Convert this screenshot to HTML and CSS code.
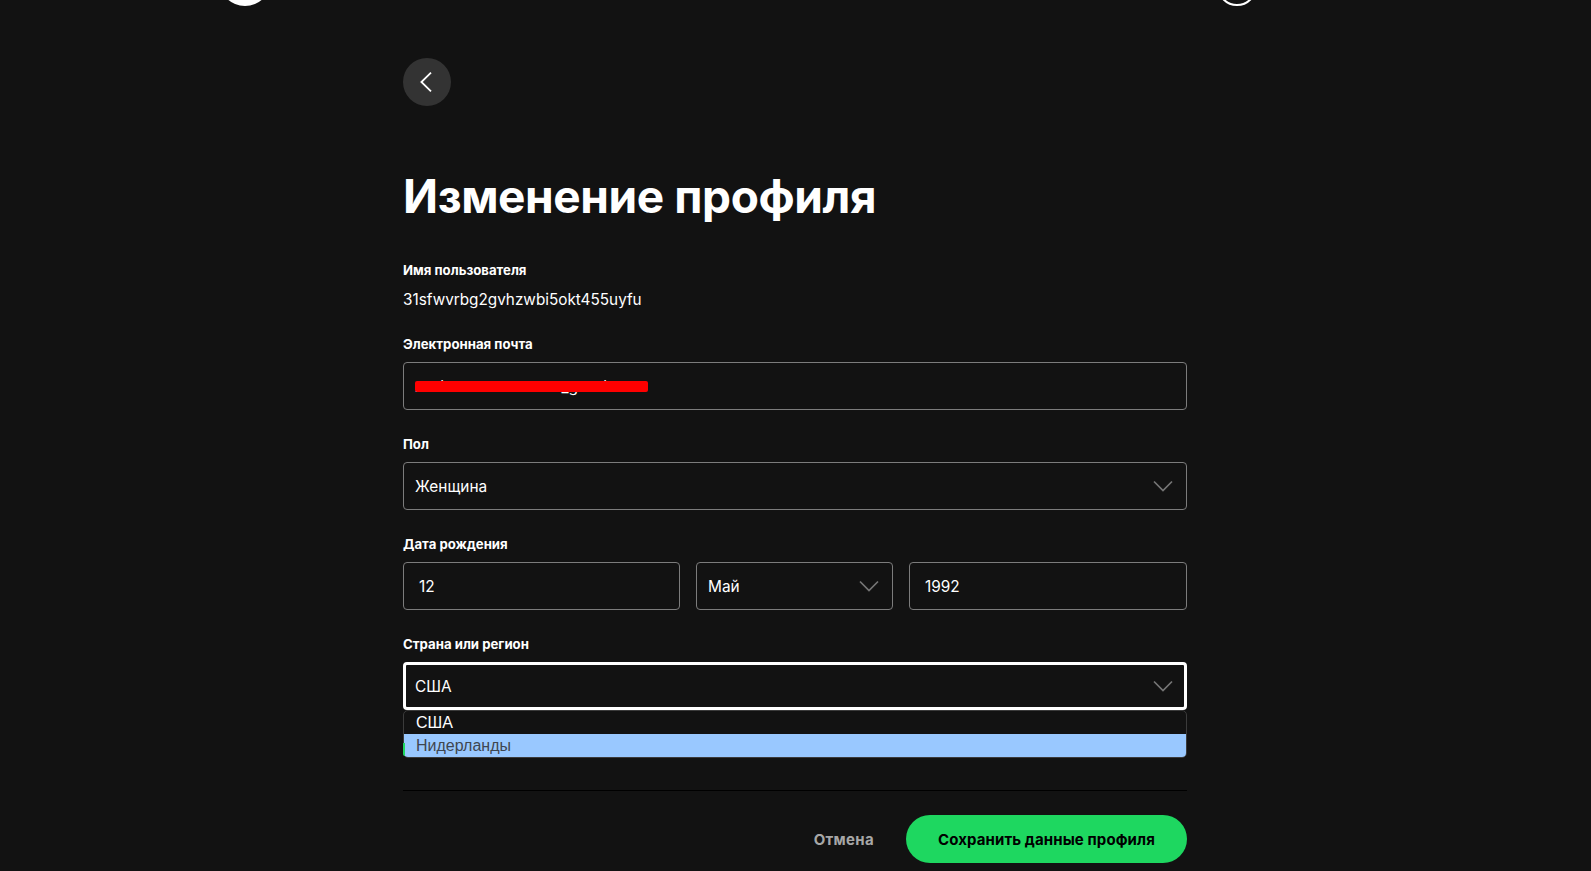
FILE: index.html
```html
<!DOCTYPE html>
<html lang="ru">
<head>
    <meta charset="UTF-8">
    <title>Изменение профиля</title>
    <link rel="stylesheet" href="styles.css">
</head>
<body>
    <!-- Top bar, scrolled almost out of view -->
    <div class="top-bar">
        <span class="logo-dot"></span>
        <span class="user-ring"></span>
    </div>

    <div class="page">
        <button class="back-button">
            <svg width="24" height="24" viewBox="0 0 24 24"><path d="M16 2.6 L6.4 12 L16 21.4" fill="none" stroke="#fff" stroke-width="1.8"/></svg>
        </button>

        <h1>Изменение профиля</h1>

        <div class="field field-plain">
            <div class="field-label">Имя пользователя</div>
            <div class="field-value">31sfwvrbg2gvhzwbi5okt455uyfu</div>
        </div>

        <div class="field">
            <div class="field-label">Электронная почта</div>
            <div class="control">
                <span class="masked-text">xxxlxxxxxxxxxxxxxx_gxxxlxxxx</span>
                <span class="redaction"></span>
            </div>
        </div>

        <div class="field">
            <div class="field-label">Пол</div>
            <div class="control">
                Женщина
                <svg class="chevron" width="20" height="12" viewBox="0 0 20 12"><path d="M1 1.5 L10 10.5 L19 1.5" fill="none" stroke="#757575" stroke-width="1.7"/></svg>
            </div>
        </div>

        <div class="field">
            <div class="field-label">Дата рождения</div>
            <div class="date-row">
                <div class="control date-input">12</div>
                <div class="control">
                    Май
                    <svg class="chevron" width="20" height="12" viewBox="0 0 20 12"><path d="M1 1.5 L10 10.5 L19 1.5" fill="none" stroke="#757575" stroke-width="1.7"/></svg>
                </div>
                <div class="control date-input">1992</div>
            </div>
        </div>

        <div class="field">
            <div class="field-label">Страна или регион</div>
            <div class="select-wrap">
                <div class="control focused">
                    США
                    <svg class="chevron" width="20" height="12" viewBox="0 0 20 12"><path d="M1 1.5 L10 10.5 L19 1.5" fill="none" stroke="#757575" stroke-width="1.7"/></svg>
                </div>
                <!-- Open native select list -->
                <div class="select-list">
                    <div class="option">США</div>
                    <div class="option option-hover">Нидерланды</div>
                </div>
            </div>
            <div class="green-edge"></div>
        </div>

        <div class="actions">
            <button class="cancel-button">Отмена</button>
            <button class="save-button">Сохранить данные профиля</button>
        </div>
    </div>
</body>
</html>
```

FILE: styles.css
```css
/* Basic reset */
* {
    box-sizing: border-box;
    margin: 0;
    padding: 0;
}

body {
    font-family: Inter, "Noto Sans", sans-serif;
    background-color: #121212;
    color: #fff;
    height: 100vh;
    overflow: hidden;
}

.top-bar {
    height: 6px;
    display: flex;
    justify-content: space-between;
    align-items: flex-end;
    width: 1038px;
    margin-left: 219px;
    overflow: hidden;
}

.logo-dot {
    width: 52px;
    height: 52px;
    flex: none;
    border-radius: 50%;
    background-color: #fff;
}

.user-ring {
    width: 40px;
    height: 40px;
    flex: none;
    border-radius: 50%;
    border: 2px solid #fff;
}

.page {
    width: 784px;
    margin-left: 403px;
    padding-top: 52px;
}

.back-button {
    width: 48px;
    height: 48px;
    display: flex;
    align-items: center;
    justify-content: center;
    border: none;
    border-radius: 50%;
    background-color: #333;
}

h1 {
    font-size: 46px;
    line-height: 58px;
    font-weight: 700;
    letter-spacing: -0.4px;
    margin-top: 61px;
    margin-bottom: 35px;
}

.field {
    position: relative;
    margin-bottom: 24px;
}

.field-plain {
    margin-bottom: 22px;
}

.field-label {
    font-size: 13.2px;
    line-height: 20px;
    font-weight: 700;
    margin-bottom: 8px;
}

.field-value {
    font-size: 15.3px;
    line-height: 24px;
}

.control {
    position: relative;
    height: 48px;
    display: flex;
    align-items: center;
    justify-content: space-between;
    padding: 0 13px 0 11px;
    font-size: 15.4px;
    border: 1px solid #7c7c7c;
    border-radius: 4px;
    background-color: #121212;
}

.masked-text {
    white-space: nowrap;
}

.redaction {
    position: absolute;
    left: 11px;
    top: 18px;
    width: 233px;
    height: 11px;
    border-radius: 2px;
    background-color: #f00;
}

.date-row {
    display: grid;
    grid-template-columns: 277px 197px 278px;
    gap: 16px;
}

.date-input {
    padding-left: 15px;
}

.select-wrap {
    position: relative;
}

.control.focused {
    border: 3px solid #fff;
    padding-left: 9px;
    padding-right: 11px;
}

.select-list {
    position: absolute;
    z-index: 2;
    top: 48px;
    left: 0;
    right: 0;
    height: 48px;
    overflow: hidden;
    border: 1px solid #3b3b3b;
    border-radius: 5px;
    background-color: #121212;
    font-family: "Liberation Sans", Arial, sans-serif;
    font-size: 16px;
}

.option {
    height: 23px;
    line-height: 23px;
    padding-left: 12px;
}

.option-hover {
    background-color: #99c8ff;
    color: #3f4650;
}

/* Sliver of something green that shows past the corner of the open list */
.green-edge {
    position: absolute;
    z-index: 3;
    left: 0;
    top: 109px;
    width: 2px;
    height: 13px;
    border-bottom-left-radius: 4px;
    background-color: #1ed760;
}

.actions {
    display: flex;
    justify-content: flex-end;
    align-items: center;
    gap: 32px;
    margin-top: 80px;
    padding-top: 24px;
    border-top: 1px solid #000;
}

.cancel-button {
    border: none;
    background: none;
    color: #a7a7a7;
    font-family: inherit;
    font-size: 15px;
    font-weight: 700;
    letter-spacing: 0.3px;
}

.save-button {
    width: 281px;
    height: 48px;
    border: none;
    border-radius: 24px;
    background-color: #1ed760;
    color: #000;
    font-family: inherit;
    font-size: 15px;
    font-weight: 700;
    letter-spacing: 0.1px;
}
```
